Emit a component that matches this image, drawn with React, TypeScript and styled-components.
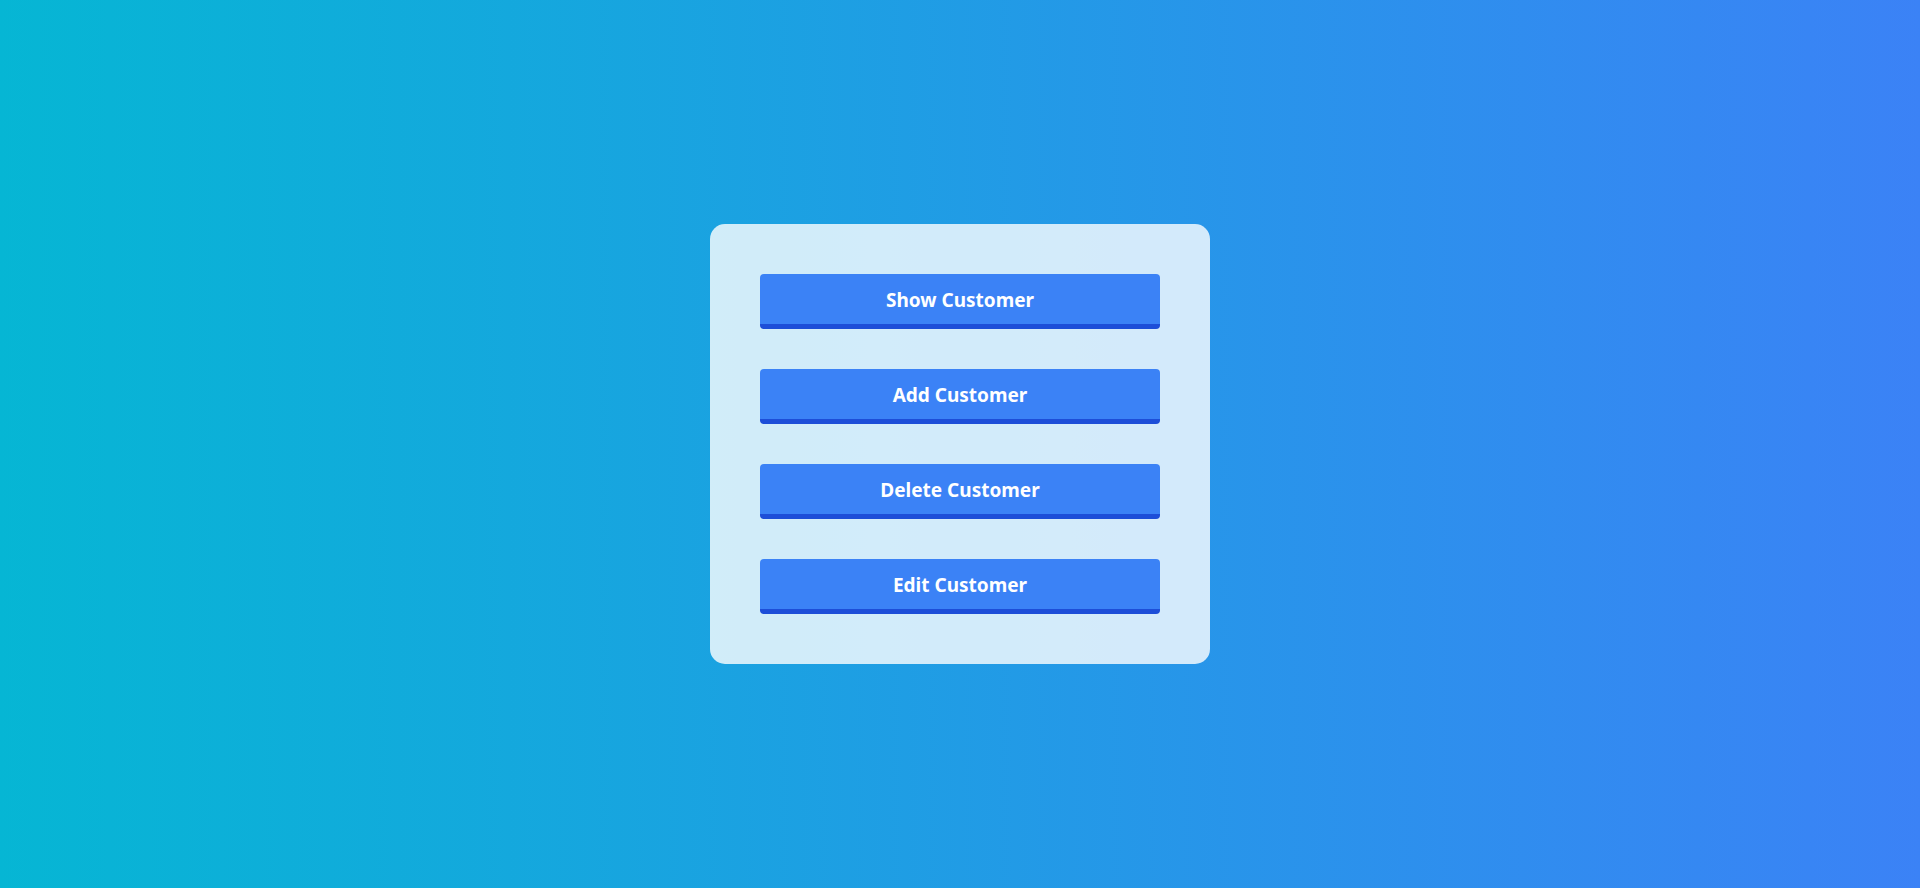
import React from 'react';
import styled, { createGlobalStyle } from 'styled-components';

const GlobalStyle = createGlobalStyle`
    html, body {
        margin: 0;
        padding: 0;
    }
    body {
        font-family: "Noto Sans", "Open Sans", sans-serif;
    }
`;

const Page = styled.div`
    min-height: 100vh;
    display: flex;
    justify-content: center;
    align-items: center;
    background: linear-gradient(to right, #06b6d4, #3b82f6);
`;

const Card = styled.div`
    width: 500px;
    box-sizing: border-box;
    padding: 50px;
    display: flex;
    flex-direction: column;
    gap: 40px;
    background-color: rgba(255, 255, 255, 0.8);
    border-radius: 15px;
`;

const ActionButton = styled.button`
    height: 55px;
    width: 100%;
    box-sizing: border-box;
    border: none;
    border-bottom: 5px solid #1d4ed8;
    border-radius: 4px;
    padding-top: 2px;
    background-color: #3b82f6;
    color: #fff;
    font-family: "Noto Sans", "Open Sans", sans-serif;
    font-size: 19px;
    font-weight: 700;
    cursor: pointer;
    &:hover {
        background-color: #2563eb;
    }
`;

const actions = ['Show Customer', 'Add Customer', 'Delete Customer', 'Edit Customer'];

export default function App() {
    return (
        <>
            <GlobalStyle />
            <Page>
                <Card>
                    {actions.map((a) => (
                        <ActionButton key={a}>{a}</ActionButton>
                    ))}
                </Card>
            </Page>
        </>
    );
}
